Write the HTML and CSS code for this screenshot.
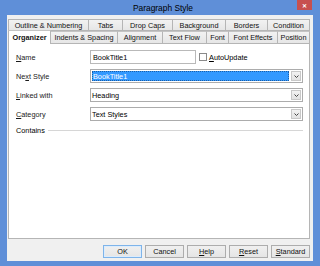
FILE: index.html
```html
<!DOCTYPE html>
<html lang="en">
<head>
  <meta charset="UTF-8">
  <title>Paragraph Style</title>
  <link rel="stylesheet" href="styles.css">
</head>
<body>

<div class="window">
  <div class="titlebar">
    <span class="title">Paragraph Style</span>
    <span class="close">&#x2715;</span>
  </div>

  <div class="client">
    <div class="tabs tabs-back">
      <div class="tab">Outline &amp; Numbering</div>
      <div class="tab">Tabs</div>
      <div class="tab">Drop Caps</div>
      <div class="tab">Background</div>
      <div class="tab">Borders</div>
      <div class="tab">Condition</div>
    </div>
    <div class="tabs tabs-front">
      <div class="tab active">Organizer</div>
      <div class="tab">Indents &amp; Spacing</div>
      <div class="tab">Alignment</div>
      <div class="tab">Text Flow</div>
      <div class="tab">Font</div>
      <div class="tab">Font Effects</div>
      <div class="tab">Position</div>
    </div>

    <div class="panel">
      <div class="form">
        <label class="lbl"><u>N</u>ame</label>
        <div class="field-line">
          <div class="input name-input">BookTitle1</div>
          <span class="check"></span>
          <span class="check-lbl"><u>A</u>utoUpdate</span>
        </div>

        <label class="lbl">Ne<u>x</u>t Style</label>
        <div class="select">
          <div class="select-text"><span class="selected">BookTitle1</span></div>
          <div class="arrow"><svg width="5" height="3" viewBox="0 0 5 3"><path d="M0.5 0.5 L2.5 2.5 L4.5 0.5" fill="none" stroke="#444" stroke-width="1"/></svg></div>
        </div>

        <label class="lbl"><u>L</u>inked with</label>
        <div class="select">
          <div class="select-text">Heading</div>
          <div class="arrow"><svg width="5" height="3" viewBox="0 0 5 3"><path d="M0.5 0.5 L2.5 2.5 L4.5 0.5" fill="none" stroke="#444" stroke-width="1"/></svg></div>
        </div>

        <label class="lbl"><u>C</u>ategory</label>
        <div class="select">
          <div class="select-text">Text Styles</div>
          <div class="arrow"><svg width="5" height="3" viewBox="0 0 5 3"><path d="M0.5 0.5 L2.5 2.5 L4.5 0.5" fill="none" stroke="#444" stroke-width="1"/></svg></div>
        </div>
      </div>

      <div class="contains">
        <span>Contains</span>
        <div class="rule"></div>
      </div>
    </div>

    <div class="buttons">
      <div class="btn default">OK</div>
      <div class="btn">Cancel</div>
      <div class="btn"><u>H</u>elp</div>
      <div class="btn"><u>R</u>eset</div>
      <div class="btn"><u>S</u>tandard</div>
    </div>
  </div>
</div>

</body>
</html>
```

FILE: styles.css
```css
html {
  font-family: "Liberation Sans", Arial, sans-serif;
  font-size: 7.3px;
}

body {
  margin: 0;
  background: #ffffff;
}

.window {
  width: 320px;
  height: 266px;
  box-sizing: border-box;
  background: #5f8fd8;
  padding: 0 7px 5px 7px;
  display: flex;
  flex-direction: column;
}

.titlebar {
  height: 15px;
  position: relative;
  display: flex;
  justify-content: center;
  align-items: center;
}

.title {
  font-size: 8.4px;
  color: #000;
  margin-left: 6px;
}

.close {
  position: absolute;
  top: 0;
  right: 1px;
  width: 15px;
  height: 10px;
  background: #c7504f;
  color: #fff;
  font-size: 6px;
  font-weight: bold;
  display: flex;
  align-items: center;
  justify-content: center;
}

.client {
  flex: 1;
  background: #f0f0f0;
  padding: 4px 3px 0 1px;
  display: flex;
  flex-direction: column;
}

.tabs {
  display: grid;
  height: 12px;
}

.tabs-back {
  grid-template-columns: 80px 34px 50px 53px 42px 43px;
}

.tabs-front {
  grid-template-columns: 43px 66px 45px 44px 22px 49px 33px;
  position: relative;
  z-index: 1;
}

.tab {
  box-sizing: border-box;
  border: 1px solid #b5b5b5;
  border-right: none;
  background: linear-gradient(#f2f2f2, #e6e6e6);
  display: flex;
  align-items: center;
  justify-content: center;
  white-space: nowrap;
  color: #111;
}

.tab:last-child {
  border-right: 1px solid #b5b5b5;
}

.tabs-front .tab {
  border-top-color: #c4c4c4;
}

.tab.active {
  background: #ffffff;
  font-weight: bold;
  border-bottom: none;
  margin-top: -1px;
  height: 14px;
  border-right: 1px solid #b5b5b5;
}

.tab.active + .tab {
  border-left: none;
}

.panel {
  height: 196px;
  box-sizing: border-box;
  background: #ffffff;
  border: 1px solid #b5b5b5;
  padding: 6px 6px 0 7px;
}

.form {
  display: grid;
  grid-template-columns: 74px 1fr;
  grid-auto-rows: 14px;
  row-gap: 5px;
  align-items: center;
}

.lbl {
  color: #1a1a1a;
}

.field-line {
  display: flex;
  align-items: center;
  height: 14px;
}

.input {
  box-sizing: border-box;
  height: 14px;
  border: 1px solid #b9b9b9;
  background: #fff;
  padding-left: 2px;
  display: flex;
  align-items: center;
}

.name-input {
  width: 106px;
}

.check {
  width: 6px;
  height: 6px;
  border: 1px solid #8a8a8a;
  background: #fff;
  margin-left: 3px;
}

.check-lbl {
  margin-left: 2px;
}

.select {
  box-sizing: border-box;
  height: 14px;
  border: 1px solid #acacac;
  background: #fff;
  display: flex;
}

.select-text {
  flex: 1;
  display: flex;
  align-items: center;
  padding: 1px;
  background: #fff;
}

.selected {
  flex: 1;
  align-self: stretch;
  display: flex;
  align-items: center;
  background: #3399ff;
  color: #fff;
  outline: 1px dotted #1b5fa8;
  outline-offset: -1px;
  padding-left: 1px;
}

.arrow {
  width: 10px;
  margin: 1px;
  box-sizing: border-box;
  border: 1px solid #c8c8c8;
  background: linear-gradient(#f2f2f2, #e2e2e2);
  display: flex;
  align-items: center;
  justify-content: center;
}

.contains {
  display: flex;
  align-items: center;
  margin-top: 5px;
}

.rule {
  flex: 1;
  height: 1px;
  background: #d6d6d6;
  margin-left: 3px;
}

.buttons {
  display: flex;
  justify-content: flex-end;
  gap: 3px;
  margin-top: 6px;
}

.btn {
  width: 39px;
  height: 13px;
  box-sizing: border-box;
  border: 1px solid #adadad;
  background: linear-gradient(#f0f0f0, #e5e5e5);
  display: flex;
  align-items: center;
  justify-content: center;
  color: #111;
}

.btn.default {
  border-color: #7eb4ea;
  box-shadow: inset 0 0 0 1px #dcecfc;
}

u {
  text-decoration-thickness: 1px;
  text-underline-offset: 1px;
}
```
